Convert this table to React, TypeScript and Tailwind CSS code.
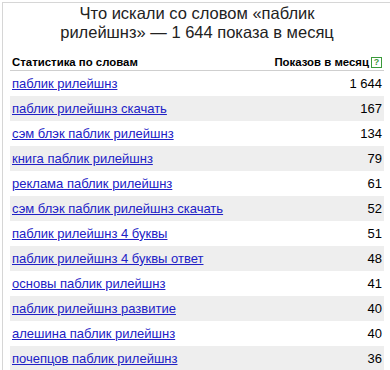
import React from "react";

const rows: [string, string][] = [
  ["паблик рилейшнз", "1 644"],
  ["паблик рилейшнз скачать", "167"],
  ["сэм блэк паблик рилейшнз", "134"],
  ["книга паблик рилейшнз", "79"],
  ["реклама паблик рилейшнз", "61"],
  ["сэм блэк паблик рилейшнз скачать", "52"],
  ["паблик рилейшнз 4 буквы", "51"],
  ["паблик рилейшнз 4 буквы ответ", "48"],
  ["основы паблик рилейшнз", "41"],
  ["паблик рилейшнз развитие", "40"],
  ["алешина паблик рилейшнз", "40"],
  ["почепцов паблик рилейшнз", "36"],
];

export default function App() {
  return (
    <div
      className="w-[390px] h-[370px] overflow-hidden bg-white pl-[2px] pt-[2px]"
      style={{ fontFamily: '"Liberation Sans", Arial, sans-serif' }}
    >
      <div className="h-full border-l border-t border-[#d6d6d6] pl-[7px] pr-[6px]">
        <div className="pt-[1px] text-center text-[16.5px] leading-[19px] text-[#222]">
          Что искали со словом «паблик
          <br />
          рилейшнз» — 1 644 показа в месяц
        </div>
        <div className="mt-[13px]">
          <div className="flex items-end justify-between border-b border-[#cfcfcf] px-[2px] pb-[1px] text-[11.4px] font-bold leading-[14px] text-black">
            <span>Статистика по словам</span>
            <span className="flex items-center gap-[2px]">
              Показов в месяц
              <span className="flex h-[11px] w-[11px] items-center justify-center border border-[#3a9a3a] text-[9px] leading-none text-[#3a9a3a]">
                ?
              </span>
            </span>
          </div>
          {rows.map(([k, v], i) => (
            <div
              key={i}
              className={`flex h-[25px] items-center justify-between px-[2px] text-[13px] ${
                i % 2 === 1 ? "bg-[#eeeeee]" : "bg-white"
              }`}
            >
              <a href="#" className="text-[#2121c6] underline">
                {k}
              </a>
              <span className="text-black">{v}</span>
            </div>
          ))}
        </div>
      </div>
    </div>
  );
}
